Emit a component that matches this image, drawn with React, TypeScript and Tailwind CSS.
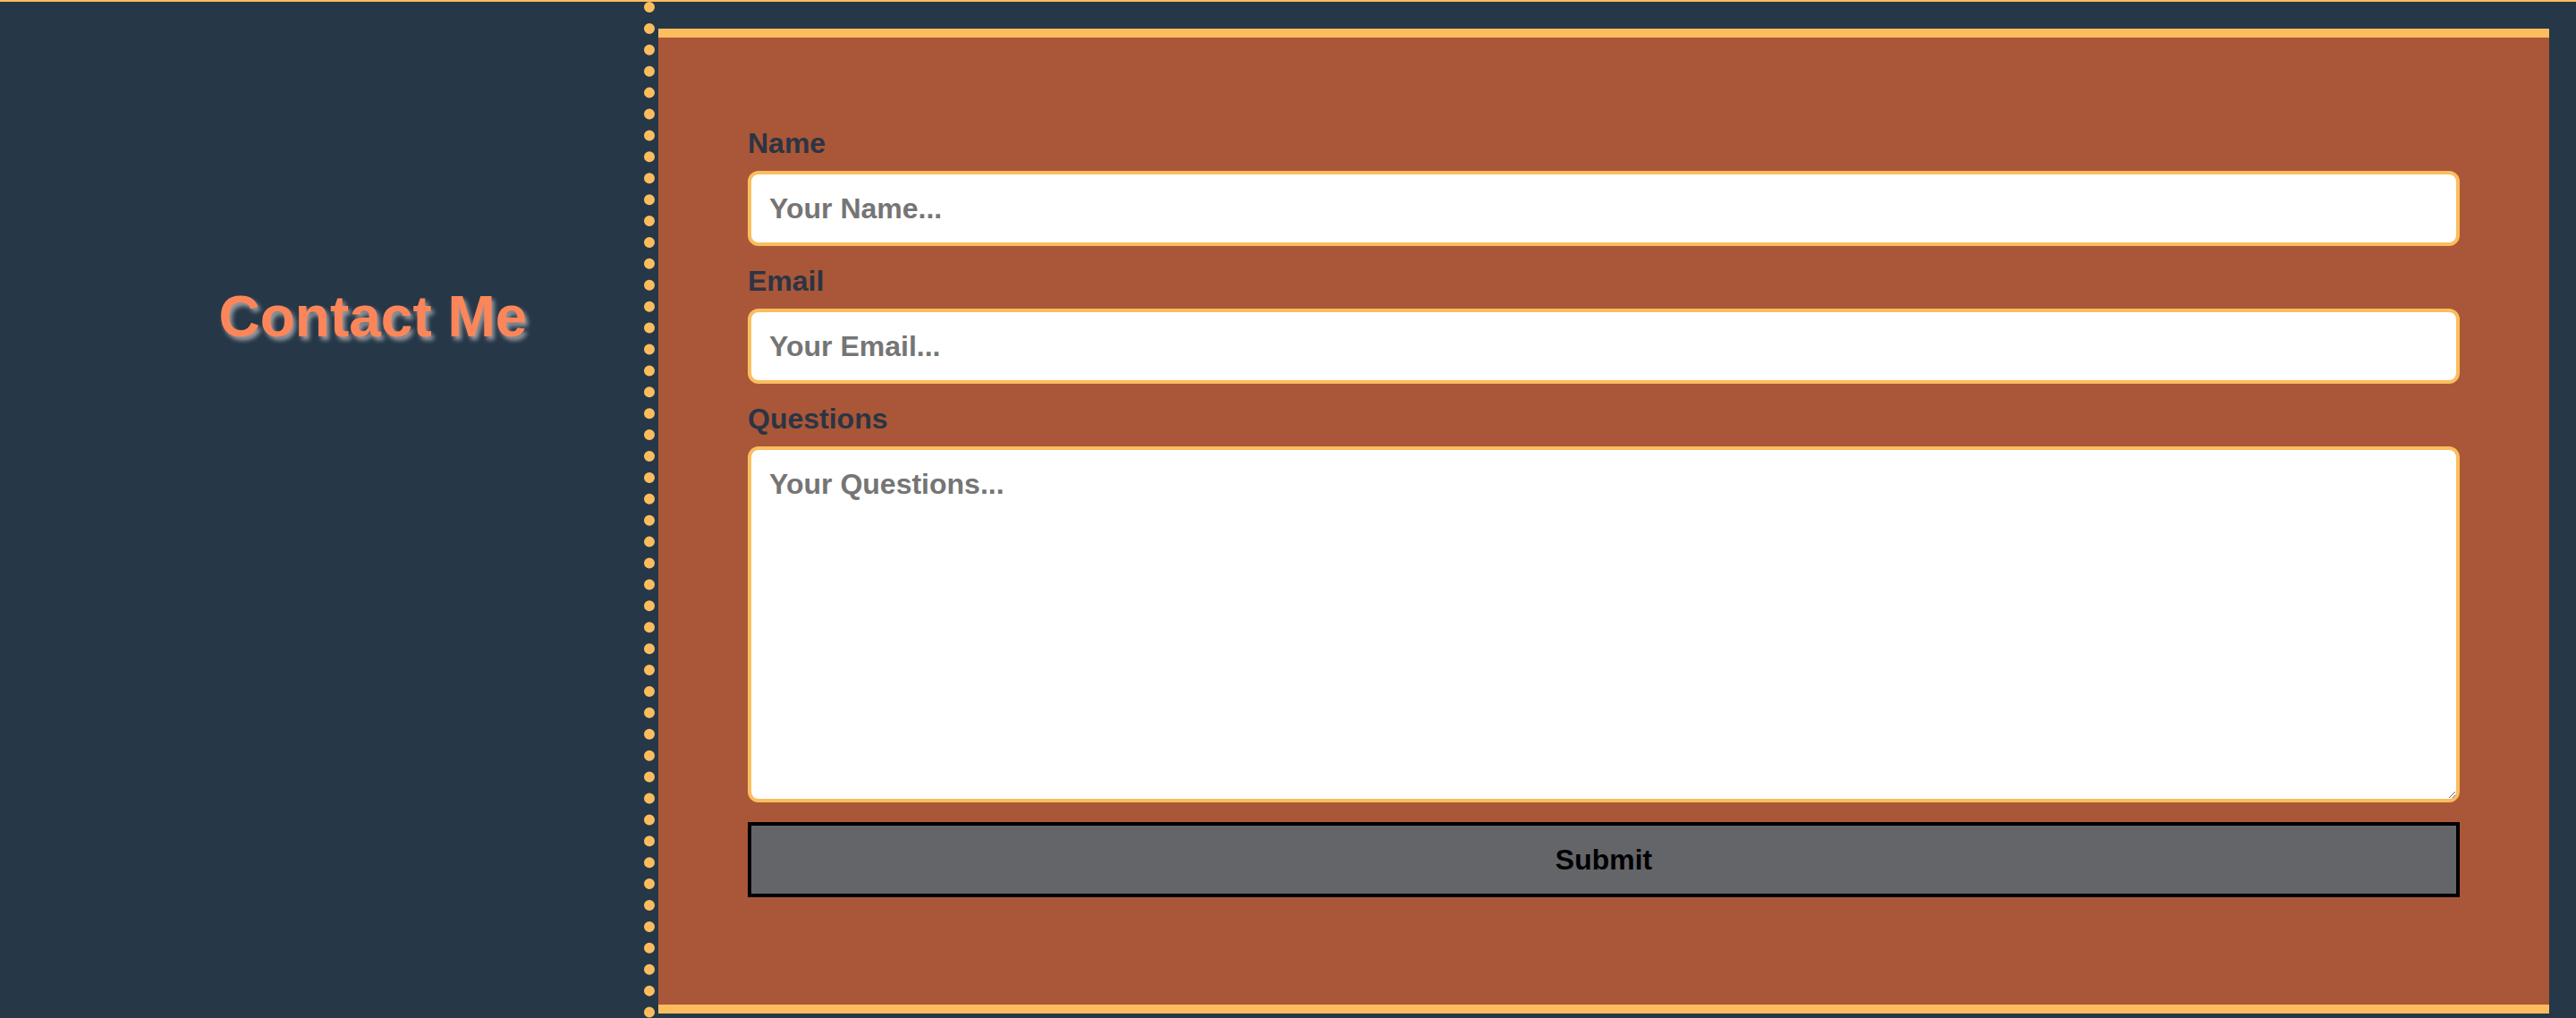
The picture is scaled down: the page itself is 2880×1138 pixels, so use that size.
import React from "react";

const fields = [
  { label: "Name", placeholder: "Your Name...", type: "text" },
  { label: "Email", placeholder: "Your Email...", type: "email" },
];

export default function App() {
  return (
    <div className="h-[1138px] bg-[#263747] border-t-2 border-[#fbbd5e] flex font-['Liberation_Sans',Arial,sans-serif] overflow-hidden">
      {/* left: heading */}
      <div className="w-[732px] shrink-0 border-r-[12px] border-dotted border-[#fbbd5e] pt-[317px] pl-[114px] flex justify-center items-start">
        <h2 className="text-[64px] leading-[1.117] font-bold text-[#fc8659] [text-shadow:3px_4px_5px_rgba(175,175,180,0.85)]">
          Contact Me
        </h2>
      </div>

      {/* right: form card */}
      <div className="flex-1 pl-[4px] pr-[30px] pt-[30px] pb-[4px]">
        <form className="bg-[#a95738] border-y-[10px] border-[#fbbd5e] px-[100px] pt-[100px] pb-[120px] flex flex-col">
          {fields.map((f) => (
            <div key={f.label} className="flex flex-col mb-[21px]">
              <label className="text-[32px] leading-[37px] font-bold text-[#2c3444] mb-[12px]">
                {f.label}
              </label>
              <input
                type={f.type}
                placeholder={f.placeholder}
                className="h-[84px] bg-white border-4 border-[#fbbd5e] rounded-[12px] px-[20px] text-[32px] font-bold text-[#333] placeholder:text-[#757575] outline-none"
              />
            </div>
          ))}
          <div className="flex flex-col">
            <label className="text-[32px] leading-[37px] font-bold text-[#2c3444] mb-[12px]">
              Questions
            </label>
            <textarea
              placeholder="Your Questions..."
              className="h-[398px] bg-white border-4 border-[#fbbd5e] rounded-[12px] px-[20px] py-[20px] text-[32px] leading-[37px] font-bold text-[#333] placeholder:text-[#757575] outline-none resize"
            />
          </div>
          <button
            type="button"
            className="mt-[22px] h-[84px] bg-[#646569] border-4 border-black text-[32px] font-bold text-black"
          >
            Submit
          </button>
        </form>
      </div>
    </div>
  );
}
